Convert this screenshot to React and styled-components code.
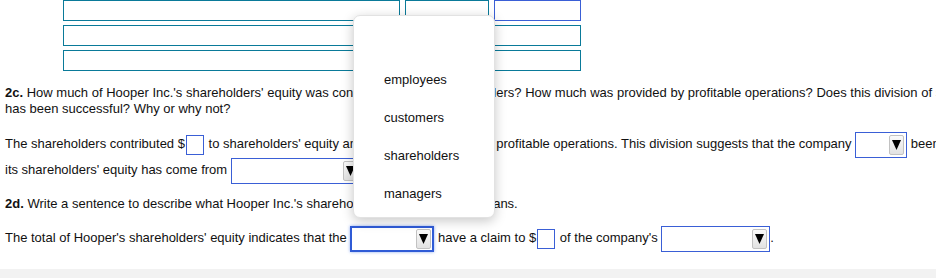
import React from "react";
import styled, { createGlobalStyle } from "styled-components";

const GlobalStyle = createGlobalStyle`
  html, body {
    margin: 0;
    padding: 0;
    overflow: hidden;
    background: #fff;
  }
  body {
    font-family: "Liberation Sans", Arial, sans-serif;
    font-size: 13px;
    color: #111;
  }
`;

const options = ["", "employees", "customers", "shareholders", "managers"];

const App = () => {
  return (
    <>
      <GlobalStyle />
      <Page>
        <EntryGrid>
          <Cell />
          <Cell />
          <Cell $active />
          <Cell $full />
          <Cell $full />
        </EntryGrid>

        <Prompt>
          <b>2c.</b> How much of Hooper Inc.'s shareholders' equity was contributed by the
          shareholders? How much was provided by profitable operations? Does this division of
          shareholders' equity suggest that the company
          <br />
          has been successful? Why or why not?
        </Prompt>

        <Answer>
          <Line>
            The shareholders contributed $<Blank /> to shareholders' equity and $<Blank /> was
            provided by profitable operations. This division suggests that the company{" "}
            <Dropdown width={52} /> been successful because most of
          </Line>
          <Line>
            its shareholders' equity has come from <Dropdown width={130} />.
          </Line>
        </Answer>

        <Prompt $gap={13}>
          <b>2d.</b> Write a sentence to describe what Hooper Inc.'s shareholders' equity
          balance means.
        </Prompt>

        <Answer $gap={13}>
          <Line>
            The total of Hooper's shareholders' equity indicates that the{" "}
            <Dropdown width={84} focused /> have a claim to $<Blank /> of the company's{" "}
            <Dropdown width={109} />.
          </Line>
        </Answer>

        <Footer />

        <Menu>
          {options.map((o, i) => (
            <MenuItem key={i}>{o}</MenuItem>
          ))}
        </Menu>
      </Page>
    </>
  );
};

export default App;

const Dropdown = ({ width, focused }) => (
  <SelectBox $w={width} $focused={focused}>
    <ArrowButton>
      <svg width="9" height="10" viewBox="0 0 9 10">
        <polygon points="0,0 9,0 4.5,10" fill="#000" />
      </svg>
    </ArrowButton>
  </SelectBox>
);

const Page = styled.div`
  position: relative;
  width: 1400px;
  padding-left: 5px;
`;

const EntryGrid = styled.div`
  display: grid;
  grid-template-columns: 337px 84px 87px;
  grid-auto-rows: 21px;
  column-gap: 5px;
  row-gap: 4px;
  margin-left: 58px;
  width: 518px;
`;

const Cell = styled.div`
  box-sizing: border-box;
  border: 1px solid ${(p) => (p.$active ? "#3a5fd6" : "#0a7a99")};
  background: #fff;
  grid-column: ${(p) => (p.$full ? "1 / -1" : "auto")};
`;

const Prompt = styled.p`
  margin: ${(p) => p.$gap ?? 14}px 0 0;
  line-height: 16px;
  white-space: nowrap;
`;

const Answer = styled.div`
  margin-top: ${(p) => p.$gap ?? 14}px;
`;

const Line = styled.div`
  height: 26px;
  line-height: 26px;
  white-space: nowrap;
`;

const Blank = styled.span`
  display: inline-block;
  box-sizing: border-box;
  width: 18px;
  height: 20px;
  margin: 0 1px;
  border: 1px solid #3a5fd6;
  background: #fff;
  vertical-align: middle;
`;

const SelectBox = styled.span`
  display: inline-flex;
  box-sizing: border-box;
  width: ${(p) => p.$w}px;
  height: 26px;
  justify-content: flex-end;
  align-items: center;
  padding-right: ${(p) => (p.$focused ? 1 : 2)}px;
  border: ${(p) => (p.$focused ? "2px solid #2f5bd6" : "1px solid #3a5fd6")};
  box-shadow: ${(p) => (p.$focused ? "0 0 3px rgba(60, 110, 230, 0.6)" : "none")};
  background: #fff;
  vertical-align: middle;
`;

const ArrowButton = styled.span`
  display: flex;
  box-sizing: border-box;
  width: 15px;
  height: 20px;
  align-items: center;
  justify-content: center;
  border: 1px solid #c2c2c2;
  border-radius: 2px;
  background: linear-gradient(#fafafa, #e2e2e2);
`;

const Footer = styled.div`
  height: 40px;
  margin: 18px 0 0 -5px;
  background: #f2f2f2;
`;

const Menu = styled.ul`
  position: absolute;
  top: 15px;
  left: 353px;
  box-sizing: border-box;
  width: 142px;
  height: 203px;
  margin: 0;
  padding: 7px 0 0 30px;
  list-style: none;
  background: #fff;
  border: 1px solid #e2e2e2;
  border-radius: 7px;
  box-shadow: 0 3px 12px rgba(0, 0, 0, 0.22);
`;

const MenuItem = styled.li`
  height: 38px;
  line-height: 38px;
  color: #111;
`;
